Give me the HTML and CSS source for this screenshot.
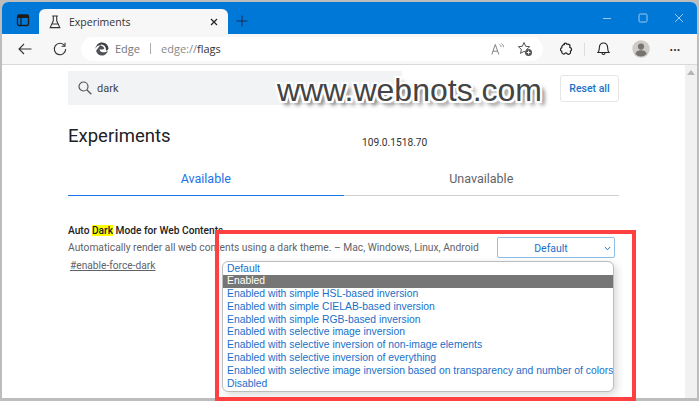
FILE: index.html
```html
<!DOCTYPE html>
<html lang="en">
<head>
<meta charset="utf-8">
<title>Experiments</title>
<link rel="stylesheet" href="styles.css">
</head>
<body>
<div class="frame">
  <div class="window">
    <header class="titlebar">
      <button class="tab-actions" aria-label="Tab actions">
        <svg width="14" height="14" viewBox="0 0 14 14"><rect x="1.5" y="2" width="11" height="10.5" rx="1.6" fill="none" stroke="#1c1c1c" stroke-width="1.3"/><rect x="1.5" y="2" width="11" height="3" fill="#1c1c1c"/><line x1="5" y1="5" x2="5" y2="12" stroke="#1c1c1c" stroke-width="1.2"/></svg>
      </button>
      <div class="tab">
        <svg class="flask" width="12" height="14" viewBox="0 0 12 14"><path d="M3.2 1h5.6M4.3 1v4.8L1.2 12.6h9.6L7.7 5.8V1M3 9h6" fill="none" stroke="#333" stroke-width="1.1"/></svg>
        <span class="tab-title">Experiments</span>
        <svg class="tab-close" width="8" height="8" viewBox="0 0 8 8"><path d="M1 1l6 6M7 1L1 7" stroke="#222" stroke-width="1.2"/></svg>
      </div>
      <svg class="plus" width="12" height="12" viewBox="0 0 12 12"><path d="M6 0.5v11M0.5 6h11" stroke="#12305c" stroke-width="1.1"/></svg>
      <div class="win-controls">
        <svg width="10" height="10" viewBox="0 0 10 10"><path d="M1 5.5h8" stroke="#9cc8ee" stroke-width="1"/></svg>
        <svg width="10" height="10" viewBox="0 0 10 10"><rect x="1" y="1" width="8" height="8" rx="1.2" fill="none" stroke="#9cc8ee"/></svg>
        <svg width="10" height="10" viewBox="0 0 10 10"><path d="M1 1l8 8M9 1L1 9" stroke="#9cc8ee" stroke-width="1"/></svg>
      </div>
    </header>
    <nav class="toolbar">
      <svg class="nav-back" width="14" height="12" viewBox="0 0 14 12"><path d="M6 1L1 6l5 5M1 6h12.5" fill="none" stroke="#333" stroke-width="1.1"/></svg>
      <svg class="nav-reload" width="14" height="14" viewBox="0 0 14 14"><path d="M11.6 3.6A5.7 5.7 0 1 0 12.7 7" fill="none" stroke="#333" stroke-width="1.1"/><path d="M12 .8v3.4H8.6" fill="none" stroke="#333" stroke-width="1.1"/></svg>
      <div class="omnibox">
        <svg class="edge-logo" width="14" height="14" viewBox="0 0 14 14"><path d="M7 .5A6.5 6.5 0 0 0 .5 7c.6-2.500 3-4 5.200-3.600 2.300.4 3.500 1.800 3.600 3.300-1 1-3.800 1-4.400.2C4.300 8.600 6 10.300 8.500 10.300c1.700 0 3.200-.7 4.200-1.900-.2 2.600-2.800 5.100-5.700 5.100-3 0-5.400-2-5.900-4.800" fill="#4f5357"/><path d="M7 .5c3.600 0 6.500 2.800 6.500 6 0 1.300-1.300 2.100-2.600 2.100.6-3.200-2-6.200-5-6C4.400 2.700 2.500 3.400 1.500 4 2.600 1.900 4.600.5 7 .5z" fill="#3e4246"/></svg>
        <span class="omni-edge">Edge</span>
        <span class="omni-sep"></span>
        <span class="omni-url">edge://<b>flags</b></span>
        <svg class="omni-read" width="14" height="12" viewBox="0 0 14 12"><path d="M.8 11.500L4.300 1.500l3.500 10M2 8.200h4.600" fill="none" stroke="#777" stroke-width=".9"/><path d="M8.500 1.200c1 .6 1.500 1.500 1.700 2.800M10.500.5c1.300.9 2 2.100 2.200 3.700" fill="none" stroke="#888" stroke-width=".9"/></svg>
        <svg class="omni-star" width="16" height="16" viewBox="0 0 16 16"><path d="M7 1.500l1.700 3.800 4 .4-3 2.700.7 4-3.400-2-3.500 2 .9-4-3-2.700 4-.4z" fill="none" stroke="#555" stroke-width="1"/><circle cx="11.500" cy="11.500" r="3.500" fill="#555"/><path d="M11.500 9.700v3.600M9.700 11.500h3.600" stroke="#fff" stroke-width=".9"/></svg>
      </div>
      <svg class="tool-ext" width="14" height="14" viewBox="0 0 14 14"><path d="M5 2.300C5 1 7.500.6 8 2.300c1-.3 3 0 3 1.700 0 .6-.2 1-.2 1.400 2 .3 2.500 3 .6 3.600.7 1.600-.4 3.800-2.600 3.200-.8-.2-.8-1.400-1.900-1.400-1 0-1.100 1.300-2.200 1.300-1.300 0-2.200-1.300-1.900-2.700-1.800-.7-1.700-3.200 0-3.800-.4-1.600 1.300-3.200 3.200-3.300z" fill="none" stroke="#222" stroke-width="1.200"/></svg>
      <span class="tool-sep"></span>
      <svg class="tool-bell" width="13" height="14" viewBox="0 0 13 14"><path d="M1 10.500c1.300-1.200 1.200-2.800 1.300-4.500C2.400 3.300 4 1 6.500 1s4.100 2.300 4.200 5c.1 1.700 0 3.300 1.300 4.500zM5 11c0 2 3 2 3 0" fill="none" stroke="#222" stroke-width="1.100"/></svg>
      <svg class="tool-avatar" width="18" height="18" viewBox="0 0 18 18"><circle cx="9" cy="9" r="8.700" fill="#cfcbc7"/><circle cx="9" cy="6.600" r="3.100" fill="#77736f"/><path d="M3.400 14c.6-3.100 2.900-3.800 5.600-3.800s5 .7 5.600 3.800C13 15.700 11 16.500 9 16.500S5 15.700 3.400 14z" fill="#77736f"/></svg>
      <span class="tool-more">&#8226;&#8226;&#8226;</span>
    </nav>
    <div class="viewport">
      <main class="page">
        <section class="search-row">
          <div class="search">
            <svg width="14" height="14" viewBox="0 0 14 14"><circle cx="5.500" cy="5.500" r="4.500" fill="none" stroke="#555" stroke-width="1.200"/><path d="M8.800 8.800L13.300 13.300" stroke="#555" stroke-width="1.300"/></svg>
            <span>dark</span>
          </div>
          <button class="reset">Reset all</button>
        </section>
        <section class="heading-row">
          <h1>Experiments</h1>
          <span class="version">109.0.1518.70</span>
        </section>
        <section class="tabs">
          <div class="tabs-item active">Available</div>
          <div class="tabs-item">Unavailable</div>
        </section>
        <section class="feature">
          <div class="feature-text">
            <h2>Auto <mark>Dark</mark> Mode for Web Contents</h2>
            <p>Automatically render all web contents using a dark theme. – Mac, Windows, Linux, Android</p>
            <a href="#enable-force-dark">#enable-force-dark</a>
          </div>
          <div class="select">
            <span>Default</span>
            <svg width="7" height="5" viewBox="0 0 7 5"><path d="M.8 1l2.700 2.700L6.200 1" fill="none" stroke="#1a6fc9" stroke-width="1"/></svg>
          </div>
        </section>
      </main>
      <aside class="scrollbar"><span class="scroll-up"></span></aside>
    </div>
  </div>
  <ul class="dropdown">
    <li>Default</li>
    <li class="selected">Enabled</li>
    <li>Enabled with simple HSL-based inversion</li>
    <li>Enabled with simple CIELAB-based inversion</li>
    <li>Enabled with simple RGB-based inversion</li>
    <li>Enabled with selective image inversion</li>
    <li>Enabled with selective inversion of non-image elements</li>
    <li>Enabled with selective inversion of everything</li>
    <li>Enabled with selective image inversion based on transparency and number of colors</li>
    <li>Disabled</li>
  </ul>
  <div class="callout"></div>
  <div class="watermark">www.webnots.com</div>
</div>
</body>
</html>
```
FILE: styles.css
```css
* { box-sizing: border-box; }
html, body { margin: 0; padding: 0; }
body { width: 699px; height: 401px; overflow: hidden; font-family: Roboto, "Liberation Sans", sans-serif; }
.frame { position: relative; width: 699px; height: 401px; background: #bdbdbd; padding: 2px 2px 3px 2px; }
.window { height: 100%; display: flex; flex-direction: column; background: #fff; border-radius: 6px 6px 0 0; overflow: hidden; }

.titlebar { height: 32px; flex: none; background: #0078d7; display: flex; align-items: flex-end; position: relative; }
.tab-actions { width: 37px; height: 25px; border: 0; padding: 0 0 3px 5px; background: none; display: flex; align-items: center; justify-content: center; }
.tab { width: 189px; height: 25px; background: #f7f7f7; border-radius: 6px 6px 0 0; display: flex; align-items: center; padding: 0 10px 0 10px; }
.flask { flex: none; margin-right: 8px; }
.tab-title { flex: 1; font: 10.500px "Open Sans", sans-serif; color: #333; }
.plus { margin: 0 0 7px 8px; }
.win-controls { margin-left: auto; align-self: stretch; display: flex; align-items: center; gap: 26px; padding: 0 13px 0 0; }

.toolbar { height: 31px; flex: none; background: #f7f7f7; border-bottom: 1px solid #d9d9d9; display: flex; align-items: center; }
.nav-back { margin-left: 16px; }
.nav-reload { margin-left: 21px; }
.omnibox { width: 462px; height: 24px; margin-left: 14px; margin-bottom: 1px; background: #fff; border-radius: 12px; display: flex; align-items: center; padding: 0 0 0 14px; }
.omni-edge { margin-left: 6px; font: 11px "Open Sans", sans-serif; color: #767676; }
.omni-sep { width: 1px; height: 11px; background: #aaa; margin: 0 10px; }
.omni-url { font: 11px "Open Sans", sans-serif; color: #888; }
.omni-url b { font-weight: 400; color: #333; }
.omni-read { margin-left: auto; }
.omni-star { margin: 0 10px 0 12px; }
.tool-ext { margin-left: 16px; }
.tool-sep { width: 1px; height: 13px; background: #ddd; margin: 0 12px 0 11px; }
.tool-bell { flex: none; }
.tool-avatar { margin-left: 22px; }
.tool-more { margin-left: 20px; font: 7px "Liberation Sans", sans-serif; letter-spacing: 1.200px; color: #222; }

.viewport { flex: 1; min-height: 0; display: flex; }
.page { flex: 1; min-width: 0; padding: 6px 66px 0 66px; }
.scrollbar { width: 12px; background: #f1f1f1; position: relative; }
.scroll-up { position: absolute; left: 2px; top: 5px; border: 4px solid transparent; border-top: 0; border-bottom: 5px solid #b5b5b5; }

.search-row { display: flex; justify-content: space-between; align-items: center; height: 34px; }
.search { width: 334px; height: 34px; background: #f1f3f4; display: flex; align-items: center; gap: 5px; padding-left: 10px; font: 11px Roboto, sans-serif; color: #444; }
.reset { width: 59px; height: 27px; background: #fff; border: 1px solid #e6e6e6; border-radius: 3px; color: #1a73c8; font: 500 10.500px Roboto, sans-serif; padding: 0; }

.heading-row { display: flex; margin-top: 19px; height: 24px; }
h1 { margin: 0; width: 294px; font: 400 18.500px/24px Roboto, sans-serif; color: #202124; }
.version { font: 10.200px/38px Roboto, sans-serif; color: #333; }

.tabs { display: flex; margin-top: 21px; }
.tabs-item { flex: 1; height: 27px; text-align: center; font: 12.500px/20px Roboto, sans-serif; color: #5f6368; border-bottom: 1px solid #cfcfcf; }
.tabs-item.active { color: #1a73e8; border-bottom-color: #1a73e8; }

.feature { display: flex; justify-content: space-between; margin-top: 27px; padding-right: 4px; }
.feature-text { color: #5f6368; font-size: 11px; }
h2 { margin: 0; font: 500 10.200px/15px Roboto, sans-serif; color: #202124; }
mark { background: #ffff00; color: #202124; }
.feature-text p { margin: 2px 0 0; font: 10.250px/16px Roboto, sans-serif; }
.feature-text a { display: inline-block; margin: 3px 0 0 2px; font: 10.200px/14px Roboto, sans-serif; color: #5f6368; }
.select { width: 118px; height: 21px; margin-top: 14px; padding: 1px 10px 0 0; border: 1px solid #8fbfe6; border-radius: 2px; position: relative; text-align: center; font: 10.500px/19px Roboto, sans-serif; color: #1a6fc9; }
.select svg { position: absolute; right: 3px; top: 8px; }

.dropdown { position: absolute; left: 222px; top: 261px; width: 392px; height: 131px; margin: 0; padding: .5px 0 0; list-style: none; background: #fff; border: 1px solid #bcbcbc; border-radius: 6px; box-shadow: 3px 3px 8px rgba(0,0,0,.15); font: 10.370px/12.800px "Liberation Sans", sans-serif; color: #1a6fc9; white-space: nowrap; overflow: hidden; }
.dropdown li { height: 12.800px; padding-left: 4px; }
.dropdown li.selected { background: #767676; color: #fff; }
.callout { position: absolute; left: 215px; top: 230px; width: 421px; height: 171px; border: 4px solid #ff4040; pointer-events: none; }
.watermark { position: absolute; left: 277px; top: 72px; font: 32px/36px "Liberation Sans", sans-serif; color: #444; white-space: nowrap; -webkit-text-stroke: .4px #444; paint-order: stroke; text-shadow: 2px 0 0 #fff, -2px 0 0 #fff, 0 2px 0 #fff, 0 -2px 0 #fff, 2px 2px 0 #fff, -2px 2px 0 #fff, 2px -2px 0 #fff, -2px -2px 0 #fff, 4px 4px 4px #555; }
```
